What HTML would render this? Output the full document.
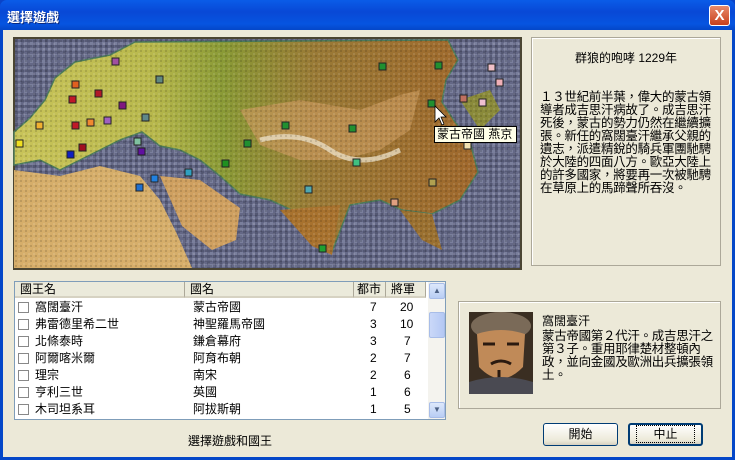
<!DOCTYPE html>
<html><head><meta charset="utf-8"><style>
*{margin:0;padding:0;box-sizing:border-box}
body{width:735px;height:460px;overflow:hidden;background:#0a43c8;font-family:"Liberation Sans","Noto Sans CJK TC","WenQuanYi Zen Hei",sans-serif;font-size:12px;color:#000}
.win{position:absolute;left:0;top:0;width:735px;height:460px;border-radius:7px 7px 0 0;background:linear-gradient(#0a5ce8,#0848d6 12px,#0654e0 24px,#0447c8 30px);}
.title{position:absolute;left:7px;top:7px;color:#fff;font-weight:bold;font-size:13px;text-shadow:1px 1px #0a2a80}
.close{position:absolute;left:709px;top:5px;width:21px;height:21px;border:1px solid #fff;border-radius:3px;background:linear-gradient(#e88a6a,#c8401c);color:#fff;font-weight:bold;font-size:15px;text-align:center;line-height:19px}
.body{position:absolute;left:3px;top:30px;width:729px;height:427px;background:#ece9d8}
.abs{position:absolute}
.panel{position:absolute;border:1px solid #aca899;background:#ece9d8}
.list{position:absolute;left:14px;top:281px;width:432px;height:139px;background:#fff;border:1px solid #7f9db9;overflow:hidden}
.hdr{position:absolute;top:0;height:16px;background:#ebeadb;border-right:1px solid #aca899;border-bottom:2px solid #d6d2c2;line-height:15px;padding-left:5px;font-size:12px}
.row{position:absolute;left:0;height:17px;width:414px;font-size:12px;line-height:17px}
.row span{position:absolute}
.cb{position:absolute;left:3px;top:3px;width:11px;height:11px;border:1px solid #888}
.btn{position:absolute;top:423px;width:75px;height:23px;border:1px solid #003c74;border-radius:3px;background:linear-gradient(#fff,#ece9d8 80%,#d6d0c0);text-align:center;line-height:21px;font-size:12px}
</style></head><body>
<div class="win">
<div class="title">選擇遊戲</div>
<div class="close">X</div>
</div>
<div class="body"></div>

<svg class="abs" style="left:13px;top:37px" width="509" height="233" viewBox="13 37 509 233">
<defs>
<pattern id="w" width="6" height="6" patternUnits="userSpaceOnUse"><rect width="6" height="6" fill="#646886"/><rect width="3" height="3" fill="#7a7f9c"/><rect x="3" y="3" width="3" height="3" fill="#535772"/></pattern>
<pattern id="t" width="5" height="5" patternUnits="userSpaceOnUse"><rect width="2" height="2" fill="#000" opacity=".12"/><rect x="3" y="3" width="2" height="2" fill="#fff" opacity=".1"/></pattern>
<linearGradient id="lg" x1="0" x2="1"><stop offset="0" stop-color="#c9c45a"/><stop offset=".3" stop-color="#b8b84c"/><stop offset=".45" stop-color="#8a9a36"/><stop offset=".65" stop-color="#9a7a36"/><stop offset="1" stop-color="#a0682c"/></linearGradient>
</defs>
<rect x="13" y="37" width="509" height="233" fill="#4a4532"/>
<rect x="15" y="39" width="505" height="229" fill="url(#w)"/>
<path d="M14,132 L30,118 45,100 55,78 75,62 110,55 135,42 448,40 458,60 446,80 442,102 455,122 470,142 478,172 460,200 432,214 402,210 380,200 350,205 332,252 316,246 300,214 270,200 240,194 220,176 200,160 180,150 160,146 142,132 120,140 100,150 80,160 60,170 40,160 14,165Z" fill="url(#lg)" stroke="#4c7a5a" stroke-width="1.5"/>
<path d="M14,170 L60,176 100,166 140,176 160,200 176,232 192,268 14,268Z" fill="#d6ae6a"/>
<path d="M160,176 L200,180 240,208 236,240 212,250 182,226Z" fill="#cfa060"/>
<path d="M280,210 L340,205 332,255 312,246Z" fill="#a8722e"/>
<path d="M400,210 L432,214 442,250 422,240Z" fill="#9a7030"/>
<path d="M460,100 L490,90 500,110 480,130Z" fill="#8a8a3a"/>
<path d="M240,110 L300,100 360,110 400,95 420,90 410,130 380,150 340,160 300,160 260,145Z" fill="#c6975a" opacity=".7"/>
<path d="M260,140 Q300,130 330,150 T400,150" stroke="#e8dcc0" stroke-width="5" fill="none" opacity=".8"/>
<rect x="15" y="39" width="505" height="229" fill="url(#t)"/>
<g stroke="#222" stroke-width="1">
<rect x="112" y="58" width="7" height="7" fill="#a050a0"/><rect x="72" y="81" width="7" height="7" fill="#e06020"/>
<rect x="95" y="90" width="7" height="7" fill="#b01828"/><rect x="69" y="96" width="7" height="7" fill="#c01828"/>
<rect x="156" y="76" width="7" height="7" fill="#608880"/><rect x="119" y="102" width="7" height="7" fill="#801880"/>
<rect x="36" y="122" width="7" height="7" fill="#f0b030"/><rect x="72" y="122" width="7" height="7" fill="#c01828"/>
<rect x="87" y="119" width="7" height="7" fill="#f08830"/><rect x="104" y="117" width="7" height="7" fill="#a060c0"/>
<rect x="142" y="114" width="7" height="7" fill="#608888"/><rect x="16" y="140" width="7" height="7" fill="#f0e020"/>
<rect x="79" y="144" width="7" height="7" fill="#a01020"/><rect x="67" y="151" width="7" height="7" fill="#1020c0"/>
<rect x="134" y="138" width="7" height="7" fill="#80c0a0"/><rect x="138" y="148" width="7" height="7" fill="#6010a0"/>
<rect x="151" y="175" width="7" height="7" fill="#2080e0"/><rect x="136" y="184" width="7" height="7" fill="#2070d0"/>
<rect x="185" y="169" width="7" height="7" fill="#30a0c0"/><rect x="222" y="160" width="7" height="7" fill="#209020"/>
<rect x="244" y="140" width="7" height="7" fill="#209030"/><rect x="282" y="122" width="7" height="7" fill="#209030"/>
<rect x="349" y="125" width="7" height="7" fill="#209030"/><rect x="353" y="159" width="7" height="7" fill="#40c080"/>
<rect x="305" y="186" width="7" height="7" fill="#50a8b0"/><rect x="319" y="245" width="7" height="7" fill="#20a030"/>
<rect x="379" y="63" width="7" height="7" fill="#209030"/><rect x="435" y="62" width="7" height="7" fill="#209030"/>
<rect x="428" y="100" width="7" height="7" fill="#209030"/><rect x="460" y="95" width="7" height="7" fill="#c07060"/>
<rect x="488" y="64" width="7" height="7" fill="#f0c0c8"/><rect x="496" y="79" width="7" height="7" fill="#f0b0b8"/>
<rect x="479" y="99" width="7" height="7" fill="#f0c0d0"/><rect x="429" y="179" width="7" height="7" fill="#b0a050"/>
<rect x="391" y="199" width="7" height="7" fill="#e0a080"/><rect x="464" y="142" width="7" height="7" fill="#f0e0b0"/>
</g>
<path d="M435,106 L435,122 439,118 442,125 444,124 441,117 446,117Z" fill="#fff" stroke="#000" stroke-width=".8"/>
</svg>
<div class="abs" style="left:434px;top:126px;width:83px;height:17px;background:#ffffe8;border:1px solid #000;font-size:12px;line-height:15px;padding-left:2px">蒙古帝國 燕京</div>

<div class="panel" style="left:531px;top:37px;width:190px;height:229px;border-color:#aca899;box-shadow:inset 1px 1px #fff">
<div class="abs" style="left:0;width:188px;top:11px;text-align:center;font-size:12px">群狼的咆哮 1229年</div>
<div class="abs" style="left:8px;top:53px;width:176px;font-size:12.5px;line-height:13px;letter-spacing:-0.3px">１３世紀前半葉，偉大的蒙古領導者成吉思汗病故了。成吉思汗死後，蒙古的勢力仍然在繼續擴張。新任的窩闊臺汗繼承父親的遺志，派遣精銳的騎兵軍團馳騁於大陸的四面八方。歐亞大陸上的許多國家，將要再一次被馳騁在草原上的馬蹄聲所吞沒。</div>
</div>

<div class="list">
<div class="hdr" style="left:0;width:170px">國王名</div>
<div class="hdr" style="left:170px;width:169px">國名</div>
<div class="hdr" style="left:339px;width:32px;padding-left:3px">都市</div>
<div class="hdr" style="left:371px;width:40px;padding-left:5px">將軍</div>
<div class="abs" style="left:413px;top:0;width:17px;height:137px;background:#f4f3ee"></div>
<div class="abs" style="left:414px;top:1px;width:16px;height:16px;background:linear-gradient(#dde8fb,#b8cdf4);border:1px solid #a8bde8;border-radius:2px;color:#4d6185;font-size:8px;text-align:center;line-height:14px">▲</div>
<div class="abs" style="left:414px;top:30px;width:16px;height:26px;background:linear-gradient(90deg,#cad8f8,#b4c8f4);border:1px solid #a8bde8;border-radius:2px"></div>
<div class="abs" style="left:414px;top:120px;width:16px;height:16px;background:linear-gradient(#dde8fb,#b8cdf4);border:1px solid #a8bde8;border-radius:2px;color:#4d6185;font-size:8px;text-align:center;line-height:14px">▼</div>
<div class="row" style="top:17px"><i class="cb"></i><span style="left:20px">窩闊臺汗</span><span style="left:178px">蒙古帝國</span><span style="left:355px">7</span><span style="left:385px">20</span></div>
<div class="row" style="top:34px"><i class="cb"></i><span style="left:20px">弗雷德里希二世</span><span style="left:178px">神聖羅馬帝國</span><span style="left:355px">3</span><span style="left:385px">10</span></div>
<div class="row" style="top:51px"><i class="cb"></i><span style="left:20px">北條泰時</span><span style="left:178px">鎌倉幕府</span><span style="left:355px">3</span><span style="left:389px">7</span></div>
<div class="row" style="top:68px"><i class="cb"></i><span style="left:20px">阿爾喀米爾</span><span style="left:178px">阿育布朝</span><span style="left:355px">2</span><span style="left:389px">7</span></div>
<div class="row" style="top:85px"><i class="cb"></i><span style="left:20px">理宗</span><span style="left:178px">南宋</span><span style="left:355px">2</span><span style="left:389px">6</span></div>
<div class="row" style="top:102px"><i class="cb"></i><span style="left:20px">亨利三世</span><span style="left:178px">英國</span><span style="left:355px">1</span><span style="left:389px">6</span></div>
<div class="row" style="top:119px"><i class="cb"></i><span style="left:20px">木司坦系耳</span><span style="left:178px">阿拔斯朝</span><span style="left:355px">1</span><span style="left:389px">5</span></div>
<div class="row" style="top:136px"><i class="cb"></i><span style="left:20px">腓力四世</span><span style="left:178px">法蘭西</span></div>
</div>
<div class="abs" style="left:14px;top:432px;width:432px;text-align:center;font-size:12px">選擇遊戲和國王</div>

<div class="panel" style="left:458px;top:301px;width:263px;height:108px;box-shadow:inset 1px 1px #fff">
<svg class="abs" style="left:10px;top:10px" width="64" height="82" viewBox="0 0 64 82">
<rect width="64" height="82" fill="#3a2e22"/>
<ellipse cx="32" cy="14" rx="30" ry="14" fill="#7a6a58"/>
<path d="M8,22 Q32,14 56,22 L54,55 Q32,78 10,55Z" fill="#c08a58"/>
<path d="M14,32 h12 M38,32 h12" stroke="#2a1a10" stroke-width="3"/>
<path d="M22,52 Q32,46 42,52 M30,58 v8" stroke="#2a1a10" stroke-width="3" fill="none"/>
<path d="M0,70 Q32,60 64,70 V82 H0Z" fill="#4a4a52"/>
</svg>
<div class="abs" style="left:83px;top:10px;font-size:12px">窩闊臺汗</div>
<div class="abs" style="left:83px;top:28px;width:176px;font-size:12.5px;line-height:13px;letter-spacing:-0.3px">蒙古帝國第２代汗。成吉思汗之第３子。重用耶律楚材整頓內政，並向金國及歐洲出兵擴張領土。</div>
</div>

<div class="btn" style="left:543px">開始</div>
<div class="btn" style="left:628px;border-width:2px;line-height:19px"><span style="border:1px dotted #000;padding:1px 16px">中止</span></div>
</body></html>
